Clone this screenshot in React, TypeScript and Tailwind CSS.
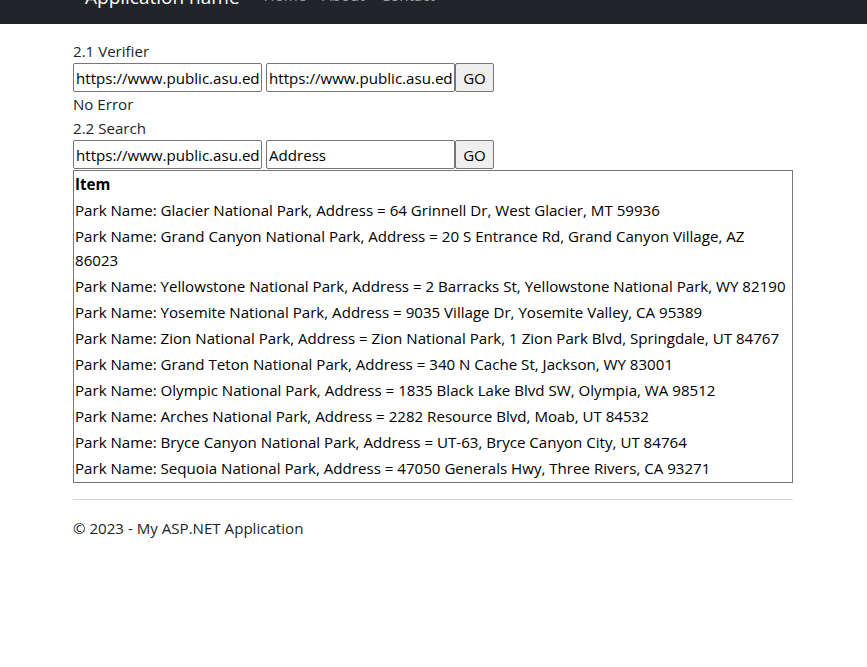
import React from "react";

const parks = [
  "Park Name: Glacier National Park, Address = 64 Grinnell Dr, West Glacier, MT 59936",
  "Park Name: Grand Canyon National Park, Address = 20 S Entrance Rd, Grand Canyon Village, AZ 86023",
  "Park Name: Yellowstone National Park, Address = 2 Barracks St, Yellowstone National Park, WY 82190",
  "Park Name: Yosemite National Park, Address = 9035 Village Dr, Yosemite Valley, CA 95389",
  "Park Name: Zion National Park, Address = Zion National Park, 1 Zion Park Blvd, Springdale, UT 84767",
  "Park Name: Grand Teton National Park, Address = 340 N Cache St, Jackson, WY 83001",
  "Park Name: Olympic National Park, Address = 1835 Black Lake Blvd SW, Olympia, WA 98512",
  "Park Name: Arches National Park, Address = 2282 Resource Blvd, Moab, UT 84532",
  "Park Name: Bryce Canyon National Park, Address = UT-63, Bryce Canyon City, UT 84764",
  "Park Name: Sequoia National Park, Address = 47050 Generals Hwy, Three Rivers, CA 93271",
];

function Input({ value }: { value: string }) {
  return (
    <input
      readOnly
      value={value}
      className="h-[29px] w-[189px] rounded-[2px] border border-[#767676] px-[2px] font-['Open_Sans',sans-serif] text-[15.1px] text-black outline-none"
    />
  );
}

function Btn() {
  return (
    <button className="h-[29px] w-[39px] rounded-[2px] border border-[#767676] bg-[#efefef] font-['Open_Sans',sans-serif] text-[15.1px] text-black">
      GO
    </button>
  );
}

export default function App() {
  return (
    <div className="min-h-[667px] bg-white font-['Open_Sans',sans-serif] text-[15.1px] leading-[24px] text-[#212529]">
      <div className="h-[24px] overflow-hidden bg-[#212529]">
        <div className="-mt-[18px] flex items-start pl-[85px]">
          <span className="text-[19px] leading-[30px] text-white">Application name</span>
          <span className="ml-[24px] mt-[1px] text-[15.1px] leading-[24px] text-[#9a9da0]">Home</span>
          <span className="ml-[16px] mt-[1px] text-[15.1px] leading-[24px] text-[#9a9da0]">About</span>
          <span className="ml-[16px] mt-[1px] text-[15.1px] leading-[24px] text-[#9a9da0]">Contact</span>
        </div>
      </div>
      <div className="ml-[73px] w-[720px] pt-[16px]">
        <div className="leading-[23px]">2.1 Verifier</div>
        <div className="flex items-center">
          <Input value="https://www.public.asu.edu" />
          <div className="w-[4px]" />
          <Input value="https://www.public.asu.edu" />
          <Btn />
        </div>
        <div>No Error</div>
        <div>2.2 Search</div>
        <div className="flex items-center">
          <Input value="https://www.public.asu.edu" />
          <div className="w-[4px]" />
          <Input value="Address" />
          <Btn />
        </div>
        <div className="mt-[1px] border border-[#767676] p-[1px] text-black">
          <div className="py-[1px] font-bold leading-[23px]">Item</div>
          {parks.map((p) => (
            <div key={p} className="py-[1px] leading-[24px]">
              {p}
            </div>
          ))}
        </div>
        <hr className="mt-[16px] border-t border-[#d6d6d6]" />
        <div className="mt-[16px]">© 2023 - My ASP.NET Application</div>
      </div>
    </div>
  );
}
